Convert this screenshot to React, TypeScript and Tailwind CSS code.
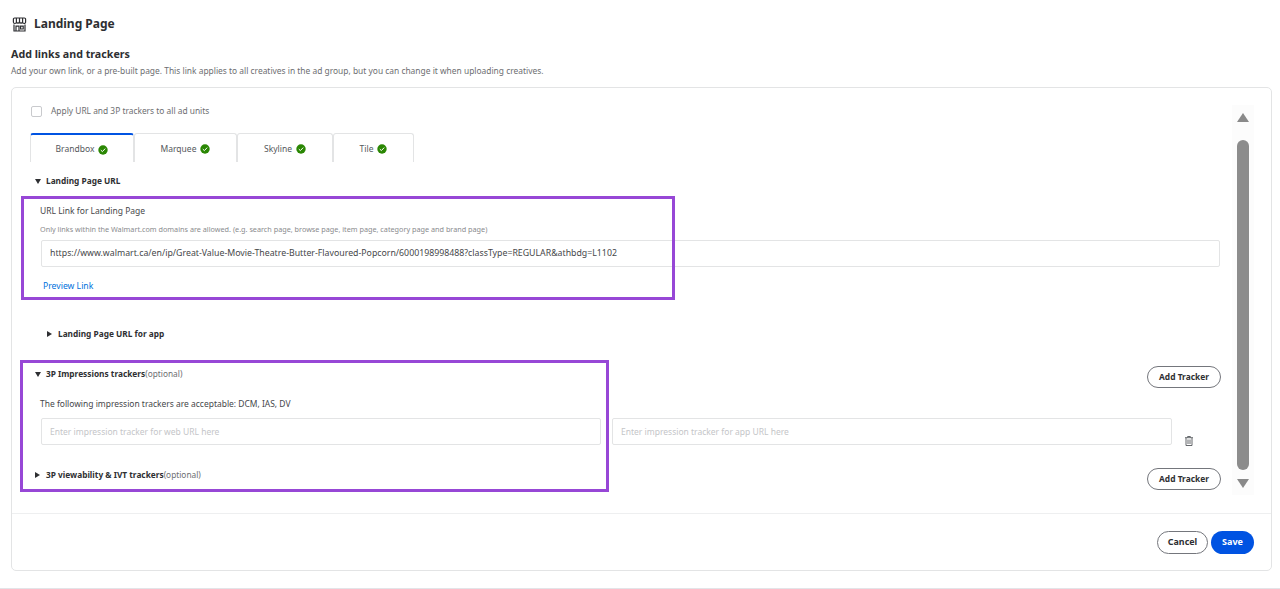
import React from "react";

const Check = () => (
  <svg width="10" height="10" viewBox="0 0 10 10" className="shrink-0">
    <circle cx="5" cy="5" r="4.7" fill="#2a8703" />
    <path d="M2.8 5.1 4.4 6.6 7.2 3.6" fill="none" stroke="#fff" strokeWidth="1" />
  </svg>
);

const Down = () => (
  <svg width="6" height="5" viewBox="0 0 6 5" className="shrink-0"><path d="M0 0h6L3 5z" fill="#2e2f32" /></svg>
);
const Right = () => (
  <svg width="5" height="6" viewBox="0 0 5 6" className="shrink-0"><path d="M0 0l5 3-5 3z" fill="#2e2f32" /></svg>
);

const Tab = ({ label, w, active }: { label: string; w: string; active?: boolean }) => (
  <div
    className={`${w} flex h-[29px] items-center justify-center gap-1 rounded-t-[3px] border border-b-0 border-[#e3e4e5] pt-[2px] text-[8.5px] text-[#55585c] ${active ? "border-t-2 border-t-[#0053e2]" : ""}`}
  >
    <span>{label}</span>
    <Check />
  </div>
);

const AddTracker = () => (
  <button className="flex h-[22px] w-[74px] items-center justify-center rounded-full border border-[#74767c] bg-white text-[8.4px] font-bold text-[#2e2f32]">
    Add Tracker
  </button>
);

const Field = ({ placeholder }: { placeholder: string }) => (
  <div className="flex h-[27px] w-[560px] items-center rounded-[2px] border border-[#e3e4e5] pl-[8px] pt-px text-[8.5px] text-[#c4c5c8]">
    {placeholder}
  </div>
);

export default function App() {
  return (
    <div className="relative flex h-[589px] flex-col overflow-hidden border-b border-[#e3e4e8] bg-white font-['Noto_Sans',sans-serif] text-[#2e2f32]">
      <div className="ml-[12px] mt-[15px] flex h-[18px] items-center gap-[7px]">
        <svg width="15" height="15" viewBox="0 0 15 15" fill="none" stroke="#2e2f32" strokeWidth="1.2" className="shrink-0">
          <path d="M2.6 1h9.8a1.2 1.2 0 0 1 1.2 1.2V5a1.5 1.5 0 0 1-3 0 1.6 1.6 0 0 1-3.1 0 1.6 1.6 0 0 1-3.1 0 1.5 1.5 0 0 1-3 0V2.2A1.2 1.2 0 0 1 2.6 1z" />
          <path d="M4.4 1v4M7.5 1v4M10.6 1v4" />
          <path d="M2 7.5V14h11V7.5" />
          <path d="M4 14V9.2h3V14M8.6 9.2h2.6V12H8.6z" />
        </svg>
        <h1 className="text-[12px] font-bold">Landing Page</h1>
      </div>
      <h2 className="ml-[11px] mt-[14px] h-[15px] text-[10.7px] font-bold leading-[15px]">Add links and trackers</h2>
      <p className="ml-[11px] mt-[2px] h-[13px] text-[8.42px] leading-[13px] text-[#6d6e71]">
        Add your own link, or a pre-built page. This link applies to all creatives in the ad group, but you can change it when uploading creatives.
      </p>

      <div className="ml-[11px] mt-[10px] flex h-[484px] w-[1261px] flex-col rounded-[5px] border border-[#e3e4e5]">
        <div className="flex h-[426px] border-b border-[#eeeff0]">
          <div className="w-[1210px] pl-[18px]">
            <div className="mt-[17px] flex h-[12px] items-center gap-[9px] pl-px">
              <div className="h-[11px] w-[11px] rounded-[2px] border border-[#c9cacd]" />
              <span className="text-[8.4px] text-[#6d6e71]">Apply URL and 3P trackers to all ad units</span>
            </div>
            <div className="mt-[16px] flex">
              <Tab label="Brandbox" w="w-[104px]" active />
              <Tab label="Marquee" w="w-[103px]" />
              <Tab label="Skyline" w="w-[96px]" />
              <Tab label="Tile" w="w-[81px]" />
            </div>
            <div className="mt-[12px] flex h-[14px] items-center gap-[5px] pl-[5px] text-[8.3px] font-bold">
              <Down />
              <span>Landing Page URL</span>
            </div>
            <div className="mt-[17px] pl-[10px] text-[8.5px] leading-[12px] text-[#46474a]">URL Link for Landing Page</div>
            <div className="mt-[7px] pl-[10px] text-[7.26px] leading-[10px] text-[#8a8b8e]">
              Only links within the Walmart.com domains are allowed. (e.g. search page, browse page, item page, category page and brand page)
            </div>
            <div className="ml-[11px] mt-[6px] flex h-[27px] w-[1179px] items-center rounded-[2px] border border-[#e3e4e5] pl-[8px] text-[8.77px] text-[#46474a]">
              https://www.walmart.ca/en/ip/Great-Value-Movie-Theatre-Butter-Flavoured-Popcorn/6000198998488?classType=REGULAR&amp;athbdg=L1102
            </div>
            <div className="mt-[13px] pl-[13px] text-[8.65px] leading-[12px] text-[#0071dc]">Preview Link</div>
            <div className="mt-[35px] flex h-[14px] items-center gap-[6px] pl-[17px] text-[8.3px] font-bold">
              <Right />
              <span>Landing Page URL for app</span>
            </div>
            <div className="mt-[24px] flex h-[22px] items-start justify-between pr-px">
              <div className="mt-[2px] flex h-[14px] items-center gap-[5px] pl-[5px] text-[8.3px]">
                <Down />
                <span><b>3P Impressions trackers</b><span className="text-[#6d6e71]">(optional)</span></span>
              </div>
              <div className="mt-[1px]"><AddTracker /></div>
            </div>
            <div className="mt-[11px] pl-[10px] text-[8.46px] leading-[12px] text-[#46474a]">The following impression trackers are acceptable: DCM, IAS, DV</div>
            <div className="ml-[11px] mt-[8px] flex gap-[11px]">
              <Field placeholder="Enter impression tracker for web URL here" />
              <Field placeholder="Enter impression tracker for app URL here" />
              <svg width="8" height="10" viewBox="0 0 8 10" fill="none" stroke="#55585c" strokeWidth="0.9" className="ml-[2px] mt-[18px] shrink-0">
                <path d="M0 1.7h8M2.6 1.5V.5h2.8v1M1 2v7.5h6V2M3 3.5v4.5M5 3.5v4.5" />
              </svg>
            </div>
            <div className="mt-[22px] flex h-[22px] items-start justify-between pr-px">
              <div className="flex h-[14px] items-center gap-[6px] pl-[5px] text-[8.3px]">
                <Right />
                <span><b>3P viewability &amp; IVT trackers</b><span className="text-[#6d6e71]">(optional)</span></span>
              </div>
              <AddTracker />
            </div>
          </div>
          <div className="ml-[10px] mt-[17px] flex h-[390px] w-[22px] flex-col items-center bg-[#fcfcfc]">
            <svg width="12" height="9" viewBox="0 0 12 9" className="mt-[8px] shrink-0"><path d="M6 0l6 9H0z" fill="#8a8a8a" /></svg>
            <div className="mt-[18px] h-[330px] w-[12px] rounded-full bg-[#8c8c8c]" />
            <svg width="12" height="9" viewBox="0 0 12 9" className="mt-[9px] shrink-0"><path d="M0 0h12L6 9z" fill="#8a8a8a" /></svg>
          </div>
        </div>
        <div className="flex flex-1 items-center justify-end gap-[3px] pr-[17px]">
          <button className="flex h-[23px] w-[51px] items-center justify-center rounded-full border border-[#74767c] text-[8.9px] font-bold">Cancel</button>
          <button className="flex h-[23px] w-[43px] items-center justify-center rounded-full bg-[#0053e2] text-[9px] font-bold text-white">Save</button>
        </div>
      </div>

      <div className="pointer-events-none absolute left-[21px] top-[196px] h-[104px] w-[654px] border-[3px] border-[#9747d6]" />
      <div className="pointer-events-none absolute left-[20px] top-[360px] h-[132px] w-[589px] border-[3px] border-[#9747d6]" />
    </div>
  );
}
